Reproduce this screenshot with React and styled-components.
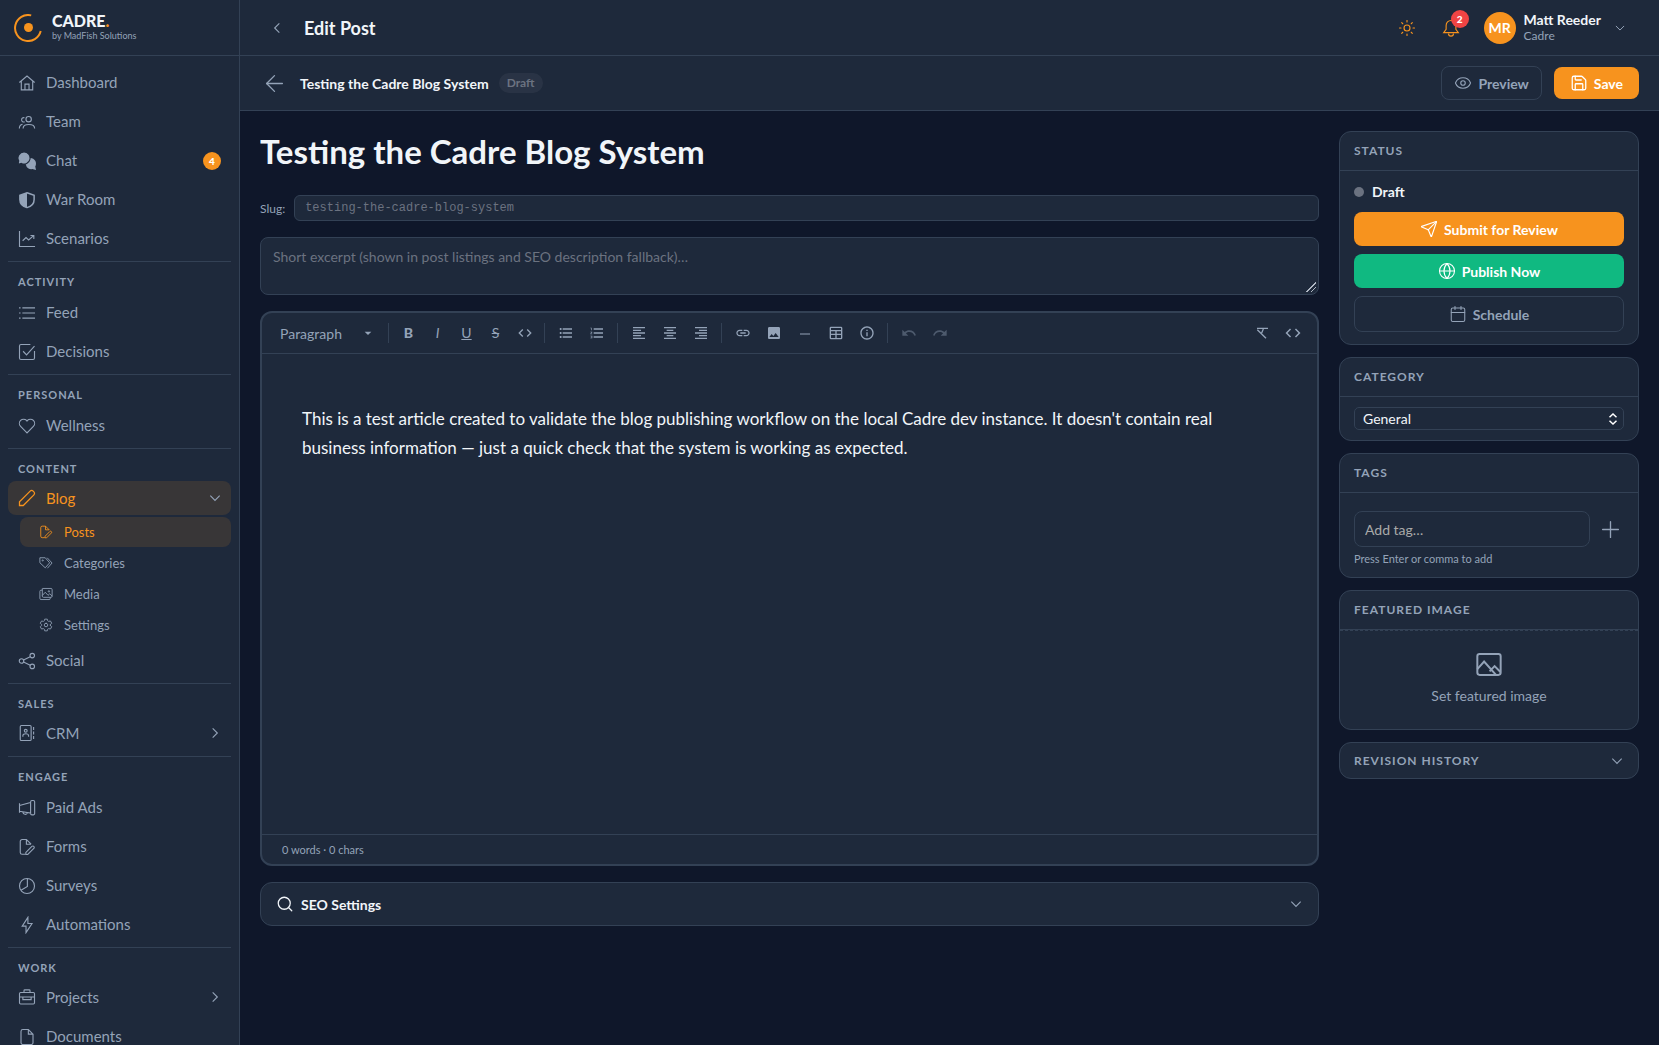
import React from "react";
import styled, { createGlobalStyle, css } from "styled-components";
import { ArrowLeft, Calendar, Eye, Globe, Plus, Save, Search, Send, Sun } from "lucide-react";
import { IoSettingsOutline } from "react-icons/io5";
import {
  MdArrowDropDown,
  MdCode,
  MdFormatAlignCenter,
  MdFormatAlignLeft,
  MdFormatAlignRight,
  MdFormatListBulleted,
  MdFormatListNumbered,
  MdImage,
  MdInfoOutline,
  MdLink,
  MdRedo,
  MdUndo,
} from "react-icons/md";

const color = {
  page: "#0f172a",
  panel: "#1e293b",
  border: "#334155",
  muted: "#94a3b8",
  dim: "#6b7280",
  text: "#f1f5f9",
  orange: "#f7931e",
  green: "#10b981",
  red: "#ef4444",
};

const GlobalStyle = createGlobalStyle`
  * {
    box-sizing: border-box;
  }
  body {
    margin: 0;
    background: ${color.page};
    color: ${color.text};
    font-family: Lato, "Liberation Sans", sans-serif;
    font-size: 14px;
    color-scheme: dark;
  }
  button, input, select, textarea {
    font: inherit;
    color: inherit;
    margin: 0;
  }
  button {
    cursor: pointer;
  }
  svg {
    display: block;
    flex: none;
  }
`;

/* ---------- icons ---------- */

const Icon = ({ size = 18, stroke = 1.5, children }) => (
  <svg
    width={size}
    height={size}
    viewBox="0 0 24 24"
    fill="none"
    stroke="currentColor"
    strokeWidth={stroke}
    aria-hidden="true"
  >
    {children}
  </svg>
);

const HomeIcon = () => (
  <Icon>
    <path d="M1.8 11.4 12 2.8l10.2 8.6M4.4 9.6v11.6h15.2V9.6M9.3 21v-7.5h5.4V21" />
  </Icon>
);

const TeamIcon = () => (
  <Icon>
    <circle cx="14.2" cy="8.2" r="3.6" />
    <path d="M6.8 20.5c0-3.4 2.6-5.2 7.6-5.2s7.8 1.8 7.8 5.2M8.6 6.3a2.9 2.9 0 1 0 .3 5.4M1.8 20.5c0-2.8 1.4-4.7 4.2-5.4" />
  </Icon>
);

const ChatIcon = () => (
  <Icon>
    <path
      d="M16.5 8a7.5 7.5 0 0 1 6.5 11.2l1 4.8-4.900-1.200A7.500 7.500 0 1 1 16.500 8Z"
      fill="currentColor"
      stroke="none"
    />
    <path
      d="M8 0a8 8 0 1 1-3.400 15.200L0 16.400l.9-4.600A8 8 0 0 1 8 0Z"
      fill="currentColor"
      stroke={color.panel}
    />
  </Icon>
);

const ShieldIcon = () => (
  <Icon stroke={2}>
    <path d="M12 2.300 21.500 5.600v5.600c0 5.600-3.700 9.300-9.500 11-5.800-1.700-9.500-5.400-9.500-11V5.600Z" />
    <path d="M12 2.300v19.900c-5.800-1.700-9.500-5.400-9.500-11V5.600Z" fill="currentColor" stroke="none" />
  </Icon>
);

const TrendIcon = () => (
  <Icon>
    <path d="M2 1.300V22h20.700M6.200 14.300l4.500-4.300 3.500 3.200 6.600-5.800M16.600 7.300h4.500v4.800" />
  </Icon>
);

const ListIcon = () => (
  <Icon>
    <path d="M5.800 5.200h16.900M5.800 12h16.900M5.800 18.800h16.900M1.400 5.200h2M1.400 12h2M1.400 18.800h2" />
  </Icon>
);

const CheckSquareIcon = () => (
  <Icon>
    <path d="M16.500 2H4a2 2 0 0 0-2 2v16a2 2 0 0 0 2 2h16a2 2 0 0 0 2-2v-9.500" />
    <path d="m6.800 11 4.600 5L22 4.300" />
  </Icon>
);

const HeartIcon = () => (
  <Icon>
    <path d="M12 21.200 3.500 12.600a5.700 5.700 0 0 1 0-8 5.500 5.500 0 0 1 7.900 0l.6.800.6-.8a5.500 5.500 0 0 1 7.900 0 5.700 5.700 0 0 1 0 8Z" />
  </Icon>
);

const PencilIcon = () => (
  <Icon stroke={1.7}>
    <path d="M2 22v-5L16.200 2.800a2.800 2.800 0 0 1 4 0l1 1a2.800 2.800 0 0 1 0 4L7 22Z" />
  </Icon>
);

const FilePenIcon = ({ size }) => (
  <Icon size={size}>
    <path d="M10 21.700H5.500a2.500 2.500 0 0 1-2.500-2.500V4.500A2.500 2.500 0 0 1 5.500 2h5.700l6.300 6.300M11.200 2v6.300h6.300" />
    <path d="M10.500 22v-2.800l8-8a1.800 1.800 0 0 1 2.600 0 1.800 1.800 0 0 1 0 2.600L13 22Z" />
  </Icon>
);

const TagsIcon = ({ size }) => (
  <Icon size={size}>
    <path d="M1.500 3h9.200l7.600 8.700-7.600 8.500L1.500 11.600ZM14 3l8.400 9-8 9" />
    <circle cx="6.400" cy="7.600" r="1" />
  </Icon>
);

const ImagesIcon = ({ size }) => (
  <Icon size={size}>
    <path d="M6 2.500h14.500a2 2 0 0 1 2 2v11.200a2 2 0 0 1-2 2H7.700a2 2 0 0 1-2-2V2.500M5.700 5.500H3.500a2 2 0 0 0-2 2v12a2 2 0 0 0 2 2h13.800a2 2 0 0 0 2-2v-1.800" />
    <path d="m5.700 14.500 5-5.500 4.800 5.300 3-2.800 4 4" />
    <circle cx="17" cy="7.500" r="1.200" />
  </Icon>
);

const ShareIcon = () => (
  <Icon>
    <circle cx="4.700" cy="12" r="3" />
    <circle cx="19" cy="4.800" r="3" />
    <circle cx="19" cy="19.200" r="3" />
    <path d="m7.400 10.700 8.900-4.500M7.400 13.300l8.900 4.500" />
  </Icon>
);

const ContactsIcon = () => (
  <Icon>
    <rect x="3" y="2" width="14.500" height="20" rx="1.500" />
    <circle cx="10.300" cy="9" r="1.900" />
    <path d="M6.500 17v-1.300c0-1.600 1.400-2.700 3.800-2.700s3.800 1.100 3.800 2.700V17M20.800 4v4M20.800 10v4M20.800 16v4" />
  </Icon>
);

const MegaphoneIcon = () => (
  <Icon>
    <path d="M2 5.500v12.800M2 8.700l14.800-4v14.200L2 16.300M16.800 4A2 2 0 0 1 18.600 2h1.800A1.800 1.800 0 0 1 22.200 3.800v15.500a1.800 1.800 0 0 1-1.800 1.800h-1.800a1.800 1.800 0 0 1-1.800-1.800ZM6.500 17.500a3.300 3.300 0 0 0 6.300 1" />
  </Icon>
);

const PieIcon = () => (
  <Icon>
    <circle cx="12" cy="12" r="10" />
    <path d="M12.500 2v10.500L4 17.700" />
  </Icon>
);

const BoltIcon = () => (
  <Icon>
    <path d="M13.200 1.800 5.600 13.500h5.100v8.700l8-12.200h-5.500Z" />
  </Icon>
);

const BriefcaseIcon = () => (
  <Icon>
    <rect x="2" y="6" width="20" height="15.300" rx="1.500" />
    <path d="M8 6V3.500A1 1 0 0 1 9 2.500h6a1 1 0 0 1 1 1V6M2 12h4.500v3.500h11V12H22M6.500 12h11" />
  </Icon>
);

const FileIcon = () => (
  <Icon>
    <path d="M6.500 2h7.300l6.200 6.200v11.300a2.500 2.500 0 0 1-2.500 2.500h-11A2.500 2.500 0 0 1 4 19.500v-15A2.500 2.500 0 0 1 6.500 2ZM13.800 2v6.200H20" />
  </Icon>
);

const BellIcon = () => (
  <Icon>
    <path d="M12 2a6.500 6.500 0 0 1 6.500 6.500v5.300l3.300 4.400H2.200l3.300-4.400V8.500A6.500 6.500 0 0 1 12 2ZM8.700 19.500a3.300 3.300 0 0 0 6.600 0" />
  </Icon>
);

const PictureIcon = () => (
  <Icon size={28} stroke={1.7}>
    <rect x="2" y="2.500" width="20" height="18" rx="2" />
    <path d="m2 15.500 5.800-6.500L18 20.500M12.500 17.500l4.300-4.500 5 5" />
  </Icon>
);

const TableIcon = () => (
  <Icon size={16} stroke={2}>
    <rect x="3.500" y="3.500" width="17" height="17" rx="1" />
    <path d="M3.500 8.500h17M3.500 14h17M12 8.500v12" />
  </Icon>
);

const RuleIcon = () => (
  <Icon size={16} stroke={1.5}>
    <path d="M4.500 13.500h15" />
  </Icon>
);

const ClearIcon = () => (
  <Icon size={16} stroke={2}>
    <path d="M4.500 5h16.500M5 7l13 13M14 6l-2.500 6" />
  </Icon>
);

const Chevron = ({ size = 16, dir = "down" }) => {
  const paths = {
    down: "m5 8.500 7 7 7-7",
    right: "m8.500 5 7 7-7 7",
    left: "m15.500 5-7 7 7 7",
  };
  return (
    <Icon size={size} stroke={1.7}>
      <path d={paths[dir]} />
    </Icon>
  );
};

const LogoMark = () => (
  <svg width="28" height="28" viewBox="0 0 28 28" fill="none" aria-hidden="true">
    <path d="M17.200 1.400A13 13 0 1 0 26.700 17" stroke={color.orange} strokeWidth="2" />
    <circle cx="14.500" cy="13.500" r="4.500" fill={color.orange} />
  </svg>
);

/* ---------- sidebar ---------- */

const Shell = styled.div`
  display: grid;
  grid-template-columns: 240px minmax(0, 1fr);
  height: 100vh;
  overflow: hidden;
`;

const Sidebar = styled.aside`
  display: flex;
  flex-direction: column;
  min-height: 0;
  background: ${color.panel};
  border-right: 1px solid ${color.border};
`;

const Brand = styled.a`
  display: flex;
  align-items: center;
  gap: 10px;
  flex: none;
  height: 56px;
  padding: 0 14px;
  border-bottom: 1px solid ${color.border};
  color: ${color.text};
  text-decoration: none;
`;

const BrandName = styled.div`
  font-size: 16px;
  line-height: 16px;
  font-weight: 900;
  span {
    color: ${color.orange};
  }
`;

const BrandSub = styled.div`
  font-size: 9px;
  line-height: 13px;
  color: ${color.muted};
`;

const Nav = styled.nav`
  flex: 1;
  min-height: 0;
  padding: 8px 8px 0;
  overflow: hidden;
`;

const NavSection = styled.section`
  & + & {
    margin-top: 4px;
    border-top: 1px solid ${color.border};
  }
`;

const NavTitle = styled.h2`
  margin: 0;
  padding: 12px 10px 4px;
  font-size: 11px;
  line-height: 16px;
  font-weight: 700;
  letter-spacing: 1px;
  text-transform: uppercase;
  color: ${color.muted};
`;

const NavList = styled.ul`
  display: flex;
  flex-direction: column;
  gap: 2px;
  margin: 0;
  padding: 0;
  list-style: none;
`;

const SubList = styled(NavList)`
  gap: 1px;
  padding: 2px 0 0 12px;
`;

const Group = styled.li`
  padding-bottom: ${(p) => (p.$open ? 0 : 2)}px;
`;

const NavLabel = styled.span`
  flex: 1;
`;

const navRow = css`
  display: flex;
  align-items: center;
  gap: 10px;
  width: 100%;
  padding: 0 10px;
  border: 0;
  border-radius: 8px;
  background: ${(p) => (p.$active ? "rgba(247, 147, 30, 0.12)" : "none")};
  color: ${(p) => (p.$active ? color.orange : color.muted)};
  font-size: 15px;
  text-align: left;
  text-decoration: none;
`;

const NavLink = styled.a`
  ${navRow}
  height: 37px;
  ${NavLabel} {
    padding-bottom: 2px;
  }
`;

const NavToggle = styled.button`
  ${navRow}
  height: 34px;
`;

const SubLink = styled.a`
  ${navRow}
  height: 30px;
  padding: 0 18px;
  font-size: 13px;
`;

const SubIcon = styled.span`
  display: grid;
  place-items: center;
  width: 16px;
`;

const ToggleMark = styled.span`
  color: ${color.muted};
  margin-right: -2px;
`;

const Count = styled.span`
  display: grid;
  place-items: center;
  width: 18px;
  height: 18px;
  border-radius: 9px;
  background: ${(p) => p.$bg};
  color: #fff;
  font-size: 10px;
  font-weight: 900;
`;

const sections = [
  {
    items: [
      { label: "Dashboard", icon: HomeIcon },
      { label: "Team", icon: TeamIcon },
      { label: "Chat", icon: ChatIcon, count: 4 },
      { label: "War Room", icon: ShieldIcon },
      { label: "Scenarios", icon: TrendIcon },
    ],
  },
  {
    title: "Activity",
    items: [
      { label: "Feed", icon: ListIcon },
      { label: "Decisions", icon: CheckSquareIcon },
    ],
  },
  { title: "Personal", items: [{ label: "Wellness", icon: HeartIcon }] },
  {
    title: "Content",
    items: [
      {
        label: "Blog",
        icon: PencilIcon,
        open: true,
        children: [
          { label: "Posts", icon: FilePenIcon, active: true },
          { label: "Categories", icon: TagsIcon },
          { label: "Media", icon: ImagesIcon },
          { label: "Settings", icon: IoSettingsOutline },
        ],
      },
      { label: "Social", icon: ShareIcon },
    ],
  },
  { title: "Sales", items: [{ label: "CRM", icon: ContactsIcon, children: [] }] },
  {
    title: "Engage",
    items: [
      { label: "Paid Ads", icon: MegaphoneIcon },
      { label: "Forms", icon: FilePenIcon },
      { label: "Surveys", icon: PieIcon },
      { label: "Automations", icon: BoltIcon },
    ],
  },
  {
    title: "Work",
    items: [
      { label: "Projects", icon: BriefcaseIcon, children: [] },
      { label: "Documents", icon: FileIcon },
    ],
  },
];

const NavItem = ({ item }) => {
  const ItemIcon = item.icon;

  if (!item.children) {
    return (
      <li>
        <NavLink href="#">
          <ItemIcon />
          <NavLabel>{item.label}</NavLabel>
          {item.count && <Count $bg={color.orange}>{item.count}</Count>}
        </NavLink>
      </li>
    );
  }

  return (
    <Group $open={item.open}>
      <NavToggle type="button" $active={item.open} aria-expanded={!!item.open}>
        <ItemIcon />
        <NavLabel>{item.label}</NavLabel>
        <ToggleMark>
          <Chevron dir={item.open ? "down" : "right"} />
        </ToggleMark>
      </NavToggle>
      {item.open && (
        <SubList>
          {item.children.map((child) => (
            <li key={child.label}>
              <SubLink href="#" $active={child.active}>
                <SubIcon>
                  <child.icon size={14} />
                </SubIcon>
                {child.label}
              </SubLink>
            </li>
          ))}
        </SubList>
      )}
    </Group>
  );
};

/* ---------- top bars ---------- */

const Main = styled.main`
  display: flex;
  flex-direction: column;
  min-width: 0;
`;

const Bar = styled.header`
  display: flex;
  align-items: center;
  flex: none;
  padding: 0 20px;
  background: ${color.panel};
  border-bottom: 1px solid ${color.border};
`;

const TopBar = styled(Bar)`
  height: 56px;
`;

const PostBar = styled(Bar)`
  height: 55px;
  gap: 12px;
`;

const IconButton = styled.button`
  display: grid;
  place-items: center;
  width: ${(p) => p.$w || 28}px;
  height: 28px;
  padding: 0;
  border: 0;
  background: none;
  color: ${(p) => p.$color || color.muted};
  &:disabled {
    opacity: 0.4;
  }
`;

const PageTitle = styled.h1`
  flex: 1;
  margin: 0 0 0 10px;
  font-size: 18px;
  font-weight: 700;
`;

const Tools = styled.div`
  display: flex;
  align-items: center;
  gap: 16px;
`;

const BellButton = styled(IconButton)`
  position: relative;
`;

const BellCount = styled(Count)`
  position: absolute;
  top: -4px;
  right: -4px;
`;

const UserButton = styled.button`
  display: flex;
  align-items: center;
  gap: 8px;
  padding: 0 12px 0 3px;
  border: 0;
  background: none;
  text-align: left;
  svg {
    color: ${color.muted};
  }
`;

const Avatar = styled.span`
  display: grid;
  place-items: center;
  width: 32px;
  height: 32px;
  border-radius: 50%;
  background: ${color.orange};
  color: #fff;
  font-size: 14px;
  font-weight: 700;
`;

const UserText = styled.span`
  display: flex;
  flex-direction: column;
  margin-right: 4px;
  font-size: 14px;
  line-height: 16px;
  font-weight: 700;
  small {
    font-size: 12px;
    line-height: 16px;
    font-weight: 400;
    color: ${color.muted};
  }
`;

const PostHead = styled.div`
  display: flex;
  align-items: center;
  flex: 1;
  gap: 10px;
`;

const PostName = styled.span`
  font-size: 14px;
  font-weight: 700;
`;

const Pill = styled.span`
  padding: 2px 8px;
  border-radius: 10px;
  background: rgba(107, 114, 128, 0.15);
  color: ${color.dim};
  font-size: 12px;
  line-height: 16px;
  font-weight: 700;
`;

const Button = styled.button`
  display: flex;
  align-items: center;
  justify-content: center;
  gap: 6px;
  height: ${(p) => p.$h || 34}px;
  padding: 0 ${(p) => (p.$bg ? 16 : 12)}px;
  border: ${(p) => (p.$bg ? "0" : `1px solid ${color.border}`)};
  border-radius: 8px;
  background: ${(p) => p.$bg || "none"};
  color: ${(p) => (p.$bg ? "#fff" : color.muted)};
  font-size: 14px;
  font-weight: 700;
`;

/* ---------- editor column ---------- */

const Content = styled.div`
  display: grid;
  grid-template-columns: minmax(0, 1fr) 300px;
  align-items: start;
  gap: 20px;
  padding: 20px;
`;

const Column = styled.div`
  display: flex;
  flex-direction: column;
  gap: ${(p) => p.$gap}px;
  min-width: 0;
`;

const TitleInput = styled.input`
  width: 100%;
  height: 48px;
  padding: 0 0 8px;
  border: 0;
  background: none;
  font-size: 33px;
  font-weight: 700;
  outline: none;
`;

const SlugRow = styled.label`
  display: flex;
  align-items: center;
  gap: 9px;
  font-size: 12px;
  color: ${color.muted};
`;

const SlugInput = styled.input`
  flex: 1;
  min-width: 0;
  height: 26px;
  padding: 0 10px;
  border: 1px solid ${color.border};
  border-radius: 6px;
  background: ${color.panel};
  font-family: "Liberation Mono", monospace;
  font-size: 12px;
  color: ${color.dim};
`;

const Excerpt = styled.textarea`
  display: block;
  width: 100%;
  height: 58px;
  padding: 9px 12px;
  border: 1px solid ${color.border};
  border-radius: 8px;
  background: ${color.panel};
  font-size: 14px;
  line-height: 20px;
  resize: vertical;
  &::placeholder {
    color: ${color.dim};
  }
  &::-webkit-resizer {
    background: linear-gradient(
        135deg,
        transparent 48%,
        #b0b8c4 48%,
        #b0b8c4 56%,
        transparent 56%,
        transparent 72%,
        #b0b8c4 72%,
        #b0b8c4 80%,
        transparent 80%
      )
      center / 10px 10px no-repeat;
  }
`;

const Editor = styled.section`
  border: 2px solid ${color.border};
  border-radius: 12px;
  background: ${color.panel};
`;

const Toolbar = styled.div`
  display: flex;
  align-items: center;
  gap: 2px;
  height: 41px;
  padding: 0 10px 0 18px;
  border-bottom: 1px solid ${color.border};
`;

const Separator = styled.span`
  width: 1px;
  height: 20px;
  margin: 0 4px;
  background: ${color.border};
`;

const Spacer = styled.span`
  flex: 1;
`;

const Glyph = styled.span`
  font-size: 14px;
  line-height: 16px;
  font-weight: ${(p) => (p.$bold ? 900 : 400)};
`;

const SelectBox = styled.span`
  display: grid;
  align-items: center;
  select,
  svg {
    grid-area: 1 / 1;
  }
  select {
    appearance: none;
    outline: none;
  }
  svg {
    justify-self: end;
    pointer-events: none;
  }
`;

const BlockSelect = styled(SelectBox)`
  width: 96px;
  margin-right: 6px;
  color: ${color.muted};
  select {
    padding: 0;
    border: 0;
    background: ${color.panel};
    font-size: 14px;
  }
`;

const Body = styled.div`
  min-height: 480px;
  padding: 50px 40px 48px;
  font-size: 17px;
  line-height: 29px;
  outline: none;
  p {
    margin: 0;
  }
`;

const EditorFoot = styled.footer`
  height: 30px;
  padding: 0 20px;
  border-top: 1px solid ${color.border};
  font-size: 11px;
  line-height: 30px;
  color: ${color.muted};
`;

const SeoToggle = styled.button`
  display: flex;
  align-items: center;
  gap: 7px;
  width: 100%;
  height: 44px;
  padding: 0 14px 0 15px;
  border: 1px solid ${color.border};
  border-radius: 12px;
  background: ${color.panel};
  font-size: 14px;
  font-weight: 700;
  text-align: left;
  svg:last-child {
    color: ${color.muted};
  }
`;

const toolGroups = [
  {
    width: 27,
    tools: [
      ["Bold", () => <Glyph $bold>B</Glyph>],
      ["Italic", () => <Glyph as="i">I</Glyph>],
      ["Underline", () => <Glyph as="u">U</Glyph>],
      ["Strikethrough", () => <Glyph as="s">S</Glyph>],
      ["Inline code", MdCode],
    ],
  },
  {
    width: 29,
    tools: [
      ["Bullet list", MdFormatListBulleted],
      ["Numbered list", MdFormatListNumbered],
    ],
  },
  {
    width: 29,
    tools: [
      ["Align left", MdFormatAlignLeft],
      ["Align center", MdFormatAlignCenter],
      ["Align right", MdFormatAlignRight],
    ],
  },
  {
    width: 29,
    tools: [
      ["Link", MdLink],
      ["Image", MdImage],
      ["Divider", RuleIcon],
      ["Table", TableIcon],
      ["Callout", MdInfoOutline],
    ],
  },
  {
    width: 29,
    disabled: true,
    tools: [
      ["Undo", MdUndo],
      ["Redo", MdRedo],
    ],
  },
];

/* ---------- side cards ---------- */

const Card = styled.section`
  border: 1px solid ${color.border};
  border-radius: 12px;
  background: ${color.panel};
  overflow: hidden;
`;

const cardTitle = css`
  font-size: 12px;
  font-weight: 700;
  letter-spacing: 1px;
  text-transform: uppercase;
  color: ${color.muted};
`;

const CardTitle = styled.h2`
  ${cardTitle}
  margin: 0;
  padding: 0 14px;
  line-height: 38px;
  border-bottom: 1px solid ${color.border};
`;

const CardBody = styled.div`
  display: flex;
  flex-direction: column;
  gap: ${(p) => p.$gap || 0}px;
  padding: ${(p) => p.$top}px 14px ${(p) => p.$bottom || p.$top}px;
`;

const StatusLine = styled.div`
  display: flex;
  align-items: center;
  gap: 8px;
  margin-bottom: 4px;
  font-size: 14px;
  line-height: 17px;
  font-weight: 700;
  &::before {
    content: "";
    width: 10px;
    height: 10px;
    border-radius: 50%;
    background: ${color.dim};
  }
`;

const CategorySelect = styled(SelectBox)`
  select {
    width: 100%;
    height: 23px;
    padding: 0 8px;
    border: 1px solid ${color.border};
    border-radius: 5px;
    background: ${color.panel};
    font-size: 14px;
  }
  svg {
    margin-right: 6px;
  }
`;

const TagRow = styled.div`
  display: flex;
  align-items: center;
  gap: 6px;
`;

const TagInput = styled.input`
  flex: 1;
  min-width: 0;
  height: 36px;
  padding: 0 10px;
  border: 1px solid ${color.border};
  border-radius: 8px;
  background: ${color.panel};
  font-size: 14px;
  &::placeholder {
    color: #a9a9a9;
  }
`;

const Hint = styled.span`
  margin-top: 4px;
  font-size: 11px;
  line-height: 16px;
  color: ${color.muted};
`;

const FeatureButton = styled.button`
  display: flex;
  flex-direction: column;
  align-items: center;
  justify-content: center;
  gap: 8px;
  width: 100%;
  height: 99px;
  padding: 0 0 6px;
  border: 0;
  border-top: 1px dashed ${color.border};
  background: none;
  color: ${color.muted};
  font-size: 14px;
`;

const RevisionToggle = styled.button`
  ${cardTitle}
  display: flex;
  align-items: center;
  justify-content: space-between;
  width: 100%;
  height: 35px;
  padding: 0 13px 0 14px;
  border: 0;
  background: none;
`;

const App = () => {
  return (
    <Shell>
      <GlobalStyle />
      <Sidebar>
        <Brand href="#">
          <LogoMark />
          <div>
            <BrandName>
              CADRE<span>.</span>
            </BrandName>
            <BrandSub>by MadFish Solutions</BrandSub>
          </div>
        </Brand>
        <Nav>
          {sections.map((section, i) => (
            <NavSection key={i}>
              {section.title && <NavTitle>{section.title}</NavTitle>}
              <NavList>
                {section.items.map((item) => (
                  <NavItem key={item.label} item={item} />
                ))}
              </NavList>
            </NavSection>
          ))}
        </Nav>
      </Sidebar>

      <Main>
        <TopBar>
          <IconButton type="button" aria-label="Collapse sidebar" $w={34}>
            <Chevron dir="left" />
          </IconButton>
          <PageTitle>Edit Post</PageTitle>
          <Tools>
            <IconButton type="button" aria-label="Toggle theme" $color={color.orange}>
              <Sun size={18} strokeWidth={1.5} />
            </IconButton>
            <BellButton type="button" aria-label="Notifications" $color={color.orange}>
              <BellIcon />
              <BellCount $bg={color.red}>2</BellCount>
            </BellButton>
            <UserButton type="button">
              <Avatar>MR</Avatar>
              <UserText>
                Matt Reeder
                <small>Cadre</small>
              </UserText>
              <Chevron size={14} />
            </UserButton>
          </Tools>
        </TopBar>

        <PostBar>
          <IconButton type="button" aria-label="Back to posts">
            <ArrowLeft size={27} strokeWidth={1.2} />
          </IconButton>
          <PostHead>
            <PostName>Testing the Cadre Blog System</PostName>
            <Pill>Draft</Pill>
          </PostHead>
          <Button type="button">
            <Eye size={18} strokeWidth={1.5} />
            Preview
          </Button>
          <Button type="button" $bg={color.orange} $h={32}>
            <Save size={18} strokeWidth={1.7} />
            Save
          </Button>
        </PostBar>

        <Content>
          <Column $gap={16}>
            <TitleInput aria-label="Post title" defaultValue="Testing the Cadre Blog System" />
            <SlugRow>
              Slug:
              <SlugInput defaultValue="testing-the-cadre-blog-system" />
            </SlugRow>
            <Excerpt
              aria-label="Excerpt"
              placeholder="Short excerpt (shown in post listings and SEO description fallback)…"
            />
            <Editor>
              <Toolbar>
                <BlockSelect>
                  <select aria-label="Block type">
                    <option>Paragraph</option>
                  </select>
                  <MdArrowDropDown size={16} />
                </BlockSelect>
                {toolGroups.map((group, i) => (
                  <React.Fragment key={i}>
                    <Separator />
                    {group.tools.map(([label, ToolIcon]) => (
                      <IconButton
                        key={label}
                        type="button"
                        aria-label={label}
                        disabled={group.disabled}
                        $w={group.width}
                      >
                        <ToolIcon size={16} />
                      </IconButton>
                    ))}
                  </React.Fragment>
                ))}
                <Spacer />
                <IconButton type="button" aria-label="Clear formatting" $w={29}>
                  <ClearIcon />
                </IconButton>
                <IconButton type="button" aria-label="Source" $w={29}>
                  <MdCode size={18} />
                </IconButton>
              </Toolbar>
              <Body contentEditable suppressContentEditableWarning role="textbox" aria-label="Post body">
                <p>
                  This is a test article created to validate the blog publishing workflow on the local
                  Cadre dev instance. It doesn't contain real business information — just a quick check
                  that the system is working as expected.
                </p>
              </Body>
              <EditorFoot>0 words · 0 chars</EditorFoot>
            </Editor>
            <SeoToggle type="button" aria-expanded="false">
              <Search size={18} strokeWidth={1.7} />
              <NavLabel>SEO Settings</NavLabel>
              <Chevron />
            </SeoToggle>
          </Column>

          <Column as="aside" $gap={12}>
            <Card>
              <CardTitle>Status</CardTitle>
              <CardBody $top={12} $gap={8}>
                <StatusLine>Draft</StatusLine>
                <Button type="button" $bg={color.orange}>
                  <Send size={18} strokeWidth={1.5} />
                  Submit for Review
                </Button>
                <Button type="button" $bg={color.green}>
                  <Globe size={18} strokeWidth={1.5} />
                  Publish Now
                </Button>
                <Button type="button" $h={36}>
                  <Calendar size={18} strokeWidth={1.4} />
                  Schedule
                </Button>
              </CardBody>
            </Card>

            <Card>
              <CardTitle>Category</CardTitle>
              <CardBody $top={10}>
                <CategorySelect>
                  <select aria-label="Category">
                    <option>General</option>
                  </select>
                  <svg width="10" height="12" viewBox="0 0 10 12" fill="none" stroke="#fff" strokeWidth="1.5">
                    <path d="M1.5 4.2 5 1l3.5 3.2M1.5 7.8 5 11l3.5-3.2" />
                  </svg>
                </CategorySelect>
              </CardBody>
            </Card>

            <Card>
              <CardTitle>Tags</CardTitle>
              <CardBody $top={18} $bottom={10}>
                <TagRow>
                  <TagInput aria-label="Add tag" placeholder="Add tag…" />
                  <IconButton type="button" aria-label="Add">
                    <Plus size={27} strokeWidth={1.2} />
                  </IconButton>
                </TagRow>
                <Hint>Press Enter or comma to add</Hint>
              </CardBody>
            </Card>

            <Card>
              <CardTitle>Featured Image</CardTitle>
              <FeatureButton type="button">
                <PictureIcon />
                Set featured image
              </FeatureButton>
            </Card>

            <Card>
              <RevisionToggle type="button" aria-expanded="false">
                Revision History
                <Chevron />
              </RevisionToggle>
            </Card>
          </Column>
        </Content>
      </Main>
    </Shell>
  );
};

export default App;
